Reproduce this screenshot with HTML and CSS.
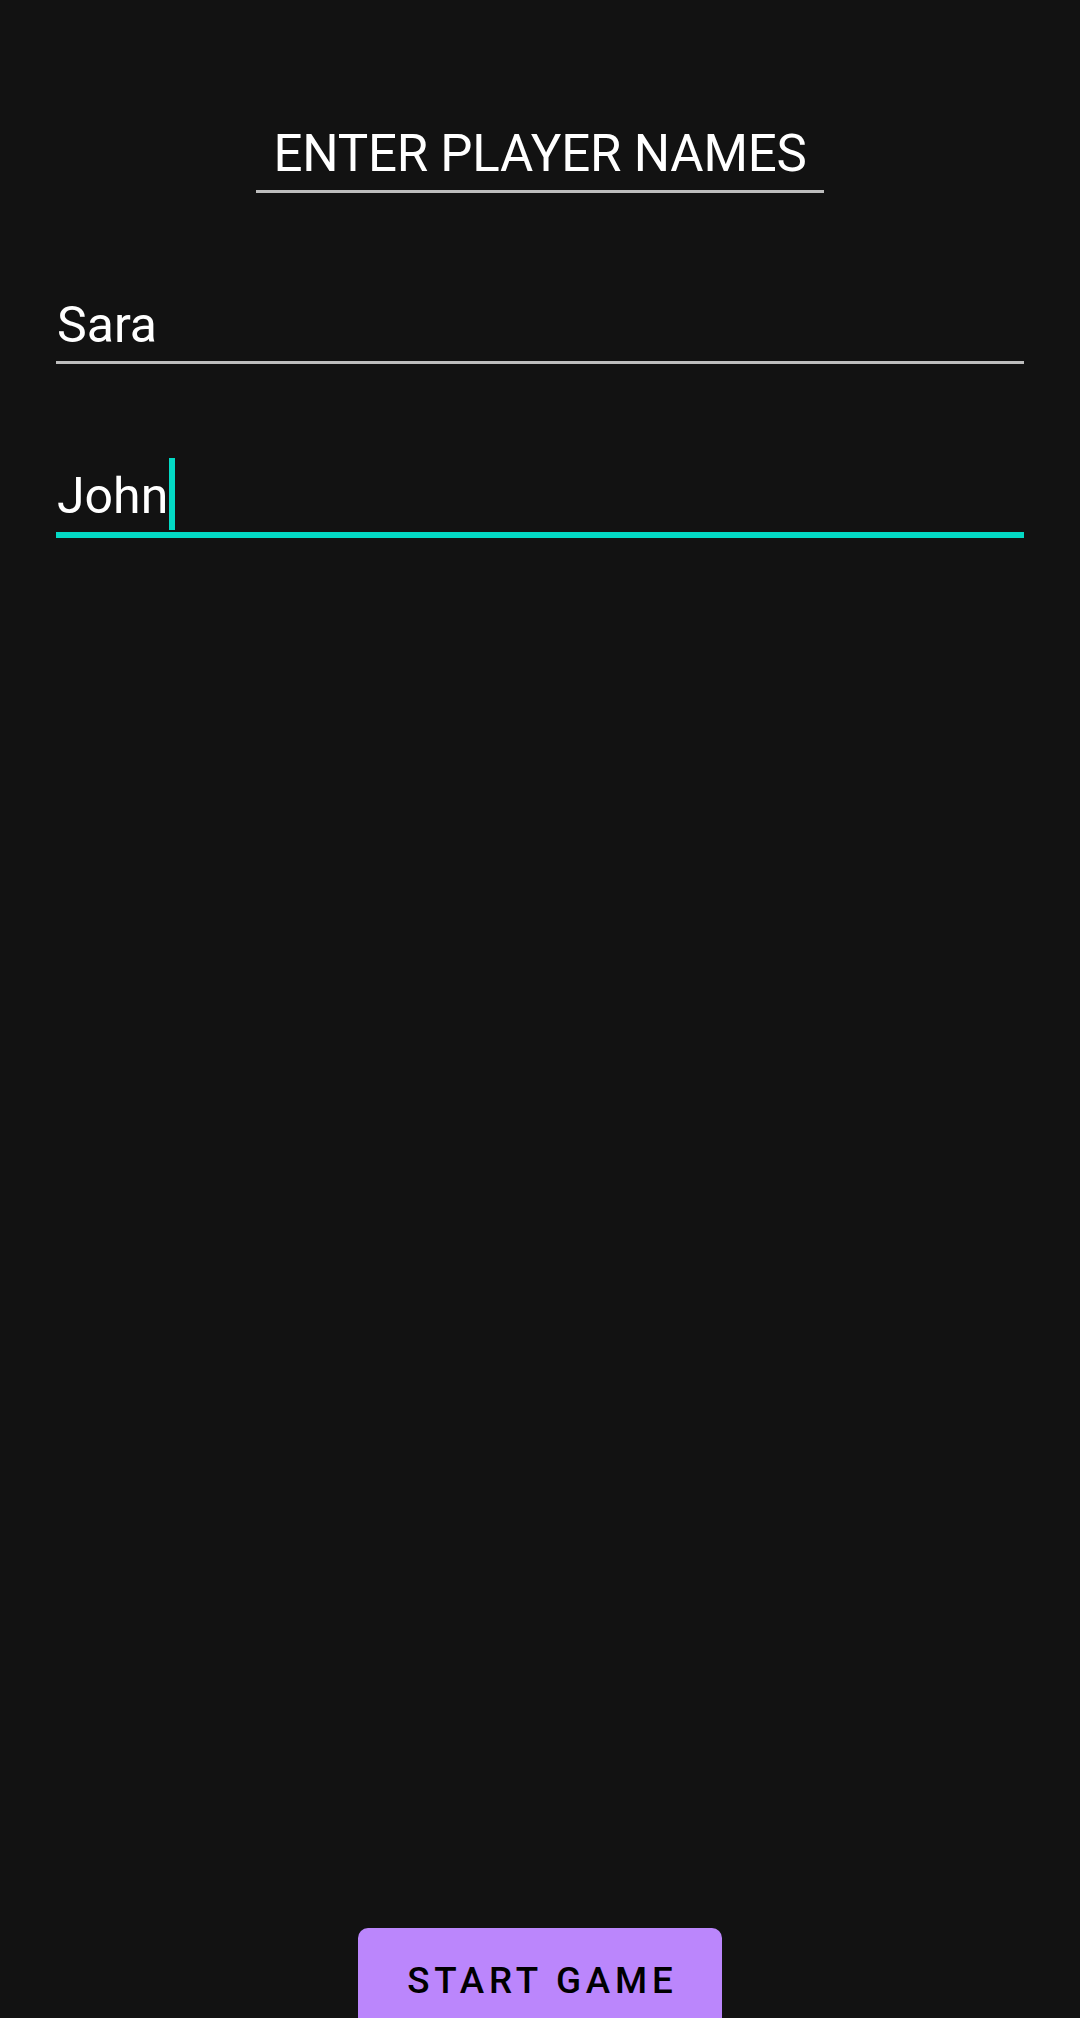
FILE: index.html
```html
<!DOCTYPE html>
<html lang="en">
<head>
<meta charset="utf-8">
<title>Enter Player Names</title>
<link rel="stylesheet" href="styles.css">
</head>
<body>
<main class="screen">
  <div class="title-wrap">
    <h1 class="title">ENTER PLAYER NAMES</h1>
  </div>
  <div class="field">Sara</div>
  <div class="field field-active">John<span class="cursor"></span></div>
  <div class="spacer"></div>
  <button class="start-btn">START GAME</button>
</main>
</body>
</html>
```
FILE: styles.css
```css
html, body {
  margin: 0;
  padding: 0;
  background: #121212;
}
.screen {
  height: 2018px;
  overflow: hidden;
  display: flex;
  flex-direction: column;
  align-items: stretch;
  font-family: Roboto, "Noto Sans", sans-serif;
  color: #ffffff;
  padding: 0 56px;
  box-sizing: border-box;
}
.title-wrap {
  display: flex;
  justify-content: center;
  padding-top: 123px;
}
.title {
  margin: 0;
  width: 568px;
  text-align: center;
  font-weight: 400;
  font-size: 51px;
  letter-spacing: -0.2px;
  line-height: 61px;
  padding-bottom: 6px;
  border-bottom: 3px solid #bdbdbd;
}
.field {
  margin-top: 102px;
  height: 60px;
  font-size: 50px;
  line-height: 60px;
  padding-left: 1px;
  padding-bottom: 6px;
  border-bottom: 3px solid #bdbdbd;
  white-space: nowrap;
}
.field-active {
  border-bottom: 6px solid #03dac5;
}
.cursor {
  display: inline-block;
  width: 6px;
  height: 72px;
  margin-top: -8px;
  margin-bottom: -4px;
  margin-left: 1px;
  vertical-align: top;
  background: #03dac5;
}
.spacer {
  flex: 1;
}
.start-btn {
  align-self: center;
  flex: none;
  width: 364px;
  height: 104px;
  margin-bottom: -14px;
  border: none;
  border-radius: 10px;
  background: #bb86fc;
  color: #000000;
  font-family: Roboto, "Noto Sans", sans-serif;
  font-weight: 500;
  font-size: 36.75px;
  letter-spacing: 4.8px;
  padding: 0;
  text-indent: 4.8px;
}
```
